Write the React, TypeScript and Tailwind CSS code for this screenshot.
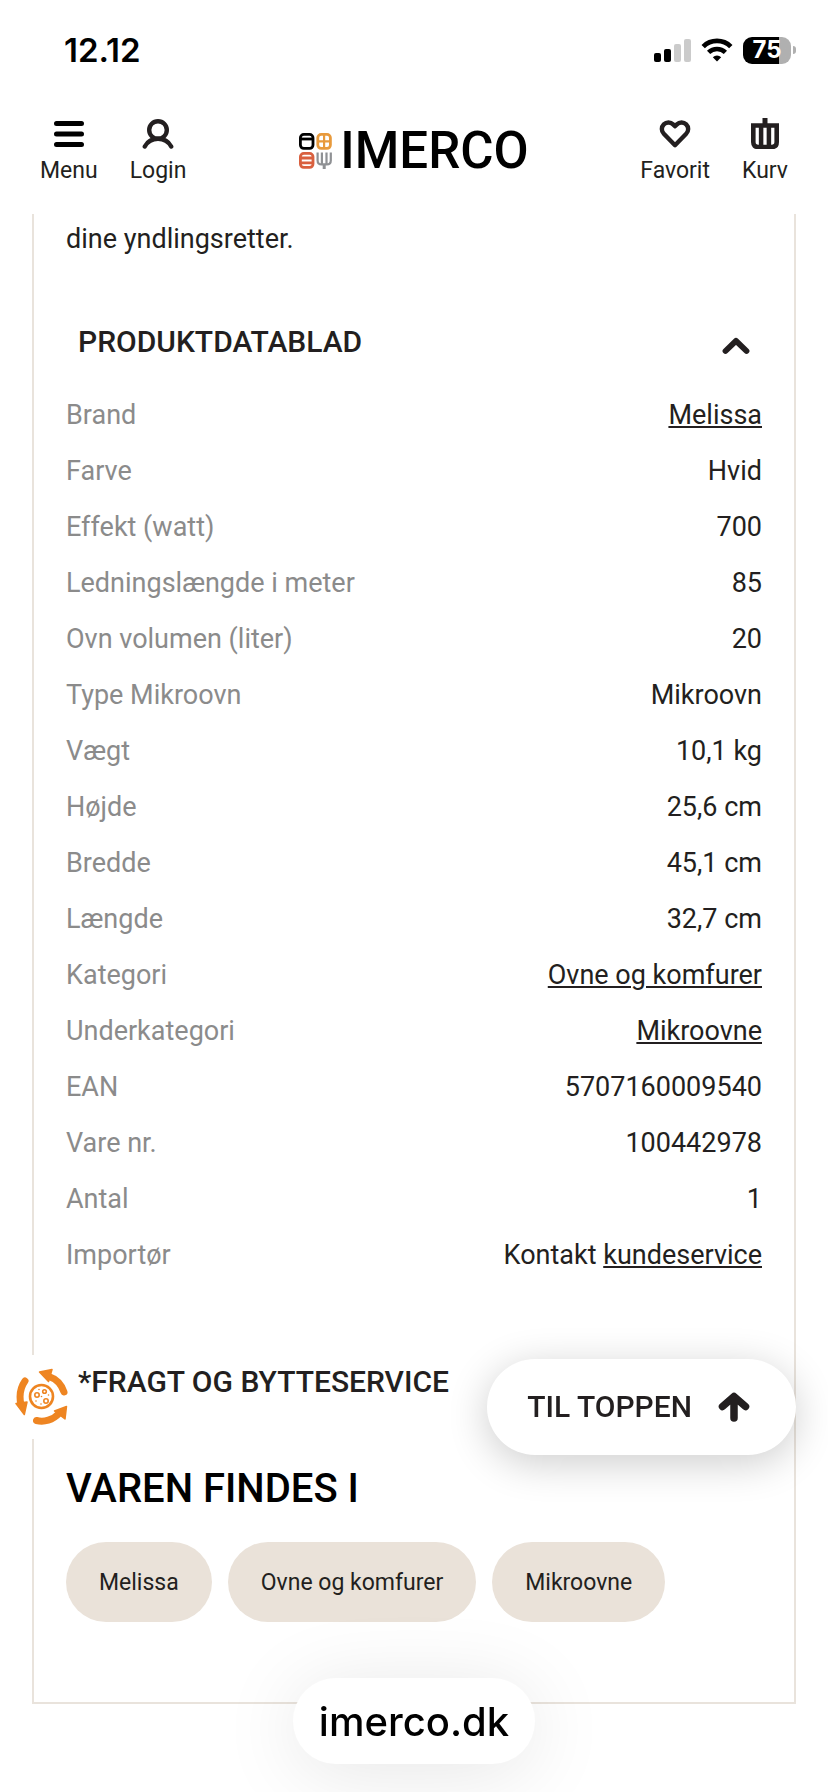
import React, { FC, ReactNode, useState } from 'react';

interface SpecProps {
  label: string;
  value: string;
  link?: string;
}

const specs: SpecProps[] = [
  { label: 'Brand', value: '', link: 'Melissa' },
  { label: 'Farve', value: 'Hvid' },
  { label: 'Effekt (watt)', value: '700' },
  { label: 'Ledningslængde i meter', value: '85' },
  { label: 'Ovn volumen (liter)', value: '20' },
  { label: 'Type Mikroovn', value: 'Mikroovn' },
  { label: 'Vægt', value: '10,1 kg' },
  { label: 'Højde', value: '25,6 cm' },
  { label: 'Bredde', value: '45,1 cm' },
  { label: 'Længde', value: '32,7 cm' },
  { label: 'Kategori', value: '', link: 'Ovne og komfurer' },
  { label: 'Underkategori', value: '', link: 'Mikroovne' },
  { label: 'EAN', value: '5707160009540' },
  { label: 'Vare nr.', value: '100442978' },
  { label: 'Antal', value: '1' },
  { label: 'Importør', value: 'Kontakt ', link: 'kundeservice' },
];

const categories = ['Melissa', 'Ovne og komfurer', 'Mikroovne'];

const StatusBar: FC = () => (
  <div className="flex h-25 items-center justify-between pl-16 pr-8 font-[Inter,sans-serif] text-black">
    <span className="text-[33px] leading-10 font-semibold">12.12</span>
    <div className="flex items-center gap-2.5">
      <svg width="37" height="23" viewBox="0 0 37 23">
        <rect x="0" y="14" width="7" height="9" rx="2" />
        <rect x="10" y="10" width="7" height="13" rx="2" />
        <rect x="20" y="5" width="7" height="18" rx="2" fill="#cbcbcb" />
        <rect x="30" y="0" width="7" height="23" rx="2" fill="#cbcbcb" />
      </svg>
      <svg width="32" height="24" viewBox="0 0 32 24">
        <path d="M2.2 8.6a19.6 19.6 0 0 1 27.6 0" fill="none" stroke="black" strokeWidth="4.8" />
        <path d="M7.6 14.4a12 12 0 0 1 16.8 0" fill="none" stroke="black" strokeWidth="4.6" />
        <path d="M16 23.6l-4.2-4.3a6 6 0 0 1 8.4 0z" />
      </svg>
      <div className="flex items-center gap-0.5">
        <div className="flex h-[27px] w-12 items-center justify-center rounded-[9px] bg-linear-to-r from-black from-75% to-[#b0b0b0] to-75%">
          <span className="text-2xl leading-6 font-bold text-white">75</span>
        </div>
        <div className="h-2 w-[3px] rounded-r-full bg-[#b0b0b0]" />
      </div>
    </div>
  </div>
);

interface NavItemProps {
  label: string;
  children: ReactNode;
}

const NavItem: FC<NavItemProps> = ({ label, children }) => (
  <button type="button" className="flex flex-col items-center gap-1 text-[23px] leading-9">
    <svg width="32" height="32" viewBox="0 0 32 32" fill="none" stroke="currentColor">
      {children}
    </svg>
    {label}
  </button>
);

const Logo: FC = () => (
  <a href="#" className="flex items-center gap-2 text-black">
    <svg width="33" height="36" viewBox="0 0 33 36" fill="none" strokeWidth="2.8">
      <g stroke="#000000">
        <rect x="1.4" y="1.4" width="12.6" height="14" rx="3.4" />
        <path d="M1.4 6h12.6" />
      </g>
      <g stroke="#e89a3c">
        <rect x="18.8" y="1.4" width="12.6" height="14" rx="3.4" />
        <path d="M25.1 1.4v14M18.8 8.4h12.6" strokeWidth="2.2" />
      </g>
      <g stroke="#d9603f">
        <rect x="1.4" y="20.4" width="12.6" height="14" rx="3.4" />
        <path d="M1.4 25h12.6M1.4 29.8h12.6" />
      </g>
      <g stroke="#8f9194" strokeWidth="2.2">
        <path d="M18.6 19.4v8q0 4 4 4h5.2q4 0 4-4v-8M22.9 19.4v12M27.5 19.4v12" />
        <path d="M25.2 31v5" strokeWidth="3" />
      </g>
    </svg>
    <span className="text-[51px] leading-9 font-medium">IMERCO</span>
  </a>
);

const Header: FC = () => (
  <header className="grid h-[114px] grid-cols-[1fr_auto_1fr] items-start px-10 pt-[17px]">
    <nav className="flex gap-8">
      <NavItem label="Menu">
        <path d="M3.5 6.5h25M3.5 17h25M3.5 27.5h25" stroke="#000000" strokeWidth="5" strokeLinecap="round" />
      </NavItem>
      <NavItem label="Login">
        <circle cx="16" cy="13" r="8.8" strokeWidth="4.4" />
        <path d="M2.8 29.5C5.5 24.5 10 21.8 16 21.8s10.5 2.7 13.2 7.7" strokeWidth="4.4" strokeLinecap="round" />
      </NavItem>
    </nav>
    <div className="pt-4">
      <Logo />
    </div>
    <nav className="flex justify-end gap-8">
      <NavItem label="Favorit">
        <path
          d="M16 28.2L4.8 16.8a6.6 6.6 0 0 1 0-9.4 6.6 6.6 0 0 1 9.3 0L16 9.3l1.9-1.9a6.6 6.6 0 0 1 9.3 0 6.6 6.6 0 0 1 0 9.4z"
          strokeWidth="4.4"
          strokeLinejoin="round"
        />
      </NavItem>
      <NavItem label="Kurv">
        <path d="M4.3 8.5h23.4v16.5q0 5-5 5H9.3q-5 0-5-5z" strokeWidth="4.6" />
        <path d="M12.1 8v22M19.9 8v22" strokeWidth="4.5" />
        <path d="M16 1v6" strokeWidth="5" />
      </NavItem>
    </nav>
  </header>
);

interface SectionButtonProps {
  title: string;
  open: boolean;
  onClick: () => void;
}

const SectionButton: FC<SectionButtonProps> = ({ title, open, onClick }) => (
  <button
    type="button"
    aria-expanded={open}
    onClick={onClick}
    className="flex h-22 w-full items-center justify-between px-3 text-left text-[30px] leading-10 font-medium uppercase"
  >
    {title}
    <svg
      className={open ? 'mt-2' : 'mt-2 rotate-180'}
      width="28"
      height="18"
      viewBox="0 0 28 18"
      fill="none"
      stroke="currentColor"
      strokeWidth="5.8"
      strokeLinecap="round"
      strokeLinejoin="round"
    >
      <path d="M3.5 14L14 3.8 24.5 14" />
    </svg>
  </button>
);

const SpecTable: FC = () => (
  <table className="mt-px w-full text-[27px] leading-10">
    <tbody>
      {specs.map(({ label, value, link }) => (
        <tr key={label}>
          <th scope="row" className="py-2 text-left font-normal text-[#8b8b8b]">
            {label}
          </th>
          <td className="py-2 text-right">
            {value}
            {link && (
              <a href="#" className="underline decoration-2 underline-offset-2">
                {link}
              </a>
            )}
          </td>
        </tr>
      ))}
    </tbody>
  </table>
);

const ReturnBadge: FC = () => (
  <a href="#" aria-label="Bytteservice" className="fixed bottom-[353px] left-0 flex h-21 w-18 items-center justify-end bg-white pr-[3px]">
    <svg width="54" height="58" viewBox="0 0 54 58" fill="none" stroke="#ee8522">
      <g strokeWidth="7" strokeLinecap="round">
        <path d="M34 8.5C41.5 11 46.5 16.5 49 24" />
        <path d="M21.5 52.5C29 54.5 38 52 44 45.5" />
        <path d="M10 13C5 20 4.2 28 5.8 36" />
      </g>
      <g fill="#ee8522" strokeWidth="1.5" strokeLinejoin="round">
        <path d="M24.5 4L37 1.5 33.5 13.5z" />
        <path d="M51.5 38.5L50 51 39.5 43z" />
        <path d="M1 35.5L12 34 9.3 46.5z" />
      </g>
      <circle cx="26.5" cy="28.5" r="11.5" strokeWidth="2.6" />
      <g strokeWidth="1.6">
        <circle cx="22" cy="27" r="2.2" />
        <circle cx="29.5" cy="23.5" r="1.8" />
        <circle cx="31" cy="33" r="2.2" />
      </g>
      <g fill="#ee8522" stroke="none">
        <circle cx="24" cy="21.5" r="0.8" />
        <circle cx="26.5" cy="28.5" r="0.8" />
        <circle cx="33.5" cy="27" r="0.8" />
        <circle cx="21" cy="33" r="0.8" />
        <circle cx="26" cy="36" r="0.8" />
      </g>
    </svg>
  </a>
);

const ToTopButton: FC = () => (
  <button
    type="button"
    onClick={() => window.scrollTo({ top: 0, behavior: 'smooth' })}
    className="fixed right-8 bottom-[337px] flex h-24 items-center gap-[26px] rounded-full bg-white pr-[46px] pl-10 text-[30px] leading-10 font-medium shadow-[0_8px_40px_rgba(0,0,0,0.2)]"
  >
    TIL TOPPEN
    <svg width="32" height="30" viewBox="0 0 32 30" fill="none" stroke="currentColor" strokeWidth="7.5" strokeLinecap="round" strokeLinejoin="round">
      <path d="M4.5 14.5L16 4.5l11.5 10M16 6v20" />
    </svg>
  </button>
);

const App: FC = () => {
  const [dataOpen, setDataOpen] = useState(true);
  const [freightOpen, setFreightOpen] = useState(false);

  return (
    <div className="min-h-screen bg-white font-[Roboto,sans-serif] text-[#231f20]">
      <StatusBar />
      <Header />
      <main className="mx-8 border-2 border-t-0 border-[#e9e3dc] px-8 pt-[5px] pb-20">
        <p className="text-[27px] leading-10">dine yndlingsretter.</p>
        <section className="mt-[39px]">
          <SectionButton title="Produktdatablad" open={dataOpen} onClick={() => setDataOpen(!dataOpen)} />
          {dataOpen && <SpecTable />}
        </section>
        <section className="mt-[55px]">
          <SectionButton title="*Fragt og bytteservice" open={freightOpen} onClick={() => setFreightOpen(!freightOpen)} />
        </section>
        <h2 className="mt-[39px] text-[40px] leading-12 font-medium text-black">VAREN FINDES I</h2>
        <div className="mt-[29px] flex flex-wrap gap-4">
          {categories.map((name) => (
            <a key={name} href="#" className="flex h-20 items-center rounded-full bg-[#eae2d9] px-[33px] pt-0.5 text-[23px]">
              {name}
            </a>
          ))}
        </div>
      </main>
      <ReturnBadge />
      <ToTopButton />
      <div className="pointer-events-none fixed inset-x-0 bottom-7 flex justify-center">
        <span className="rounded-full bg-white px-[26px] pt-5 pb-[18px] font-[Inter,sans-serif] text-[40px] leading-12 font-medium text-black shadow-[0_8px_80px_rgba(0,0,0,0.1)]">
          imerco.dk
        </span>
      </div>
    </div>
  );
};

export default App;
